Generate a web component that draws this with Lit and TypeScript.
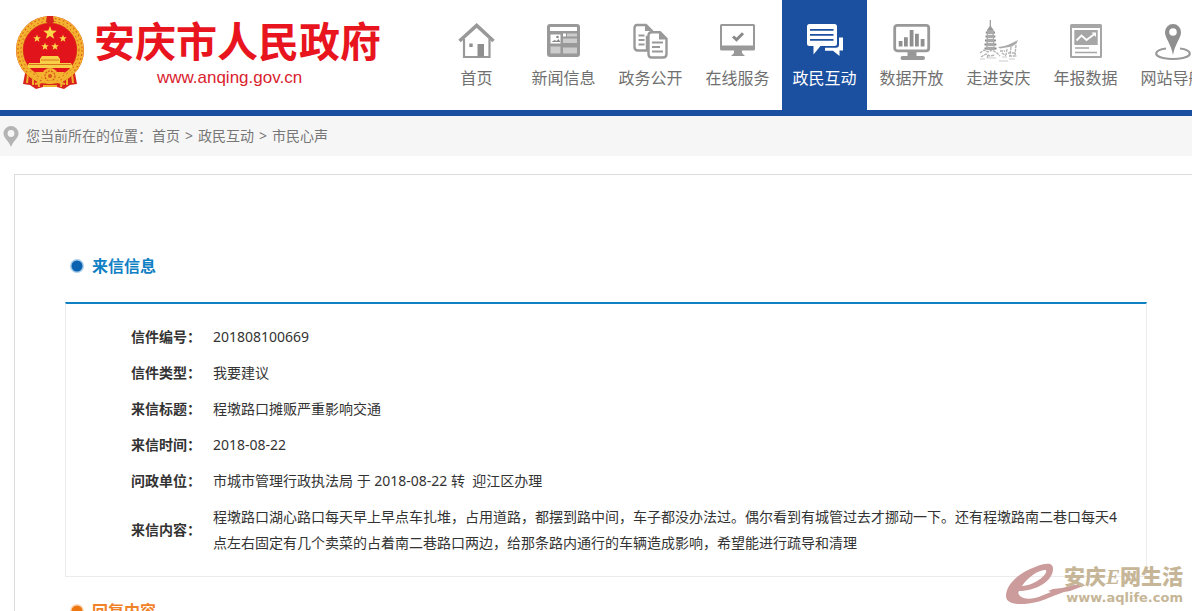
import { LitElement, html, css, svg } from "lit";
import { customElement } from "lit/decorators.js";
import { classMap } from "lit/directives/class-map.js";

const star = (cx: number, cy: number, r: number) => {
  const pts: string[] = [];
  for (let i = 0; i < 10; i++) {
    const a = (Math.PI * i) / 5 - Math.PI / 2;
    const d = i % 2 ? r * 0.42 : r;
    pts.push(`${(cx + d * Math.cos(a)).toFixed(2)},${(cy + d * Math.sin(a)).toFixed(2)}`);
  }
  return svg`<polygon points=${pts.join(" ")} fill="#fbd84a"/>`;
};

const emblem = html`<svg class="emblem" width="70" height="74" viewBox="0 0 70 74" aria-hidden="true">
  <path d="M11 52L8 68l7 1 6 4 7-2h14l7 2 6-4 7-1-3-16z" fill="#d8231c"/>
  <path d="M13 58l-1 9M18 60l0 9M23 63l1 8M57 58l1 9M52 60l0 9M47 63l-1 8M28 70h14" stroke="#f2b02c" stroke-width="2"/>
  <circle cx="35" cy="34" r="34" fill="#d93a1c"/>
  <circle cx="35" cy="34" r="30.500" fill="none" stroke="#f3b32f" stroke-width="6.600"/>
  <circle cx="35" cy="34" r="32" fill="none" stroke="#dc5a1e" stroke-width="1.200" stroke-dasharray="1.600 2.600"/>
  <circle cx="35" cy="34" r="29" fill="none" stroke="#dc5a1e" stroke-width="1" stroke-dasharray="1.600 2.800"/>
  <circle cx="35" cy="34" r="26.500" fill="#e2141b"/>
  <path d="M32 0h6l1 6-4 3-4-3z" fill="#d8231c"/>
  ${star(35, 17, 7)}${star(22, 22.5, 4)}${star(48, 22.5, 4)}${star(30, 30.5, 4)}${star(40, 30.5, 4)}
  <path d="M27 40h16l2 3v4h11l1 2v3H13v-3l1-2h11v-4z" fill="#f9cf48"/>
  <path d="M26 44h18M14 48.500h42" stroke="#d8761d" stroke-width="1"/>
  <path d="M20 56h30l-4 4H24z" fill="#f3b32f"/>
  <circle cx="35" cy="60" r="8" fill="#f3b32f"/>
  <circle cx="35" cy="60" r="5" fill="none" stroke="#d8541d" stroke-width="1.200" stroke-dasharray="2 1"/>
  <circle cx="35" cy="60" r="2" fill="#d8541d"/>
  <path d="M12 57q7 4 12 9M58 57q-7 4-12 9M20 68q15-5 30 0" fill="none" stroke="#f3b32f" stroke-width="2"/>
</svg>`;

const icons = {
  home: svg`<path d="M3.500 21L20.700 5.500 37.500 21" fill="none" stroke="#999" stroke-width="3.600"/>
    <path d="M8 19v18h25.500V19" fill="none" stroke="#999" stroke-width="2.200"/>
    <path d="M21.500 24h6.500v12.500h-6.500zM13.300 23.500h3.400v3.400h-3.400z" fill="#8f8f8f"/>`,
  news: svg`<rect x="4" y="4" width="33" height="33" rx="3" fill="#999"/>
    <path d="M7 7h27v4H7zM7.500 14.500h10v9h-10z" fill="#fff"/>
    <path d="M7.500 26.500h10v7h-10zM20 18.500h14v4.500H20zM20 27.500h14v6H20zM24 13.500h10v3H24z" fill="#ccc"/>
    <path d="M20 13.500h3v3h-3z" fill="#fff"/>
    <path d="M8.500 22l3-2 2 1 2-2 2 3z" fill="#888"/><circle cx="14.500" cy="17" r="1.300" fill="#888"/>`,
  docs: svg`<path d="M7 5h9l6 6v6h-5v13.500H8q-3.500 0-3.500-3.500V8.500Q4.500 5 7 5z" fill="#fff" stroke="#999" stroke-width="2.400"/>
    <path d="M15 4l7 7h-7z" fill="#999"/><path d="M8.500 15.500h6M8.500 20h6M8.500 24.500h6" stroke="#999" stroke-width="1.800"/>
    <path d="M21.500 12.200H30l6.500 6.500V34q0 3.500-3.500 3.500H21.500q-3 0-3-3.500V15.500q0-3.300 3-3.300z" fill="#fff" stroke="#999" stroke-width="2.400"/>
    <path d="M29 11.500l8 8h-8z" fill="#999"/><path d="M22 22.500h11M22 27h8M22 31.500h11" stroke="#999" stroke-width="1.800"/>`,
  screen: svg`<rect x="3" y="4" width="35" height="26.500" rx="1.500" fill="#999"/><path d="M5 6h31v19.500H5z" fill="#fff"/>
    <path d="M17 30h8v3l3 3H14l3-3z" fill="#999"/><path d="M16 16.500l3.500 3.200 6.500-6.500" fill="none" stroke="#8a8a8a" stroke-width="3"/>`,
  chat: svg`<path d="M35 17.500h4v13h-3.500V36L29 30.700h-8v-3h11q3 0 3-3z" fill="#fff"/>
    <path d="M5.500 4h25q2.500 0 2.500 2.500V23.500q0 2.500-2.500 2.500H16.500l-7 8.500V26h-4Q3 26 3 23.500v-17Q3 4 5.500 4z" fill="#fff"/>
    <path d="M6 9.800h23.500M6 14.800h23.500M6 19.800h23.500" stroke="#1b50a0" stroke-width="1.700"/>`,
  chart: svg`<rect x="3.700" y="5.300" width="34" height="25.500" rx="2.500" fill="#fff" stroke="#999" stroke-width="2.800"/>
    <path d="M16.500 32h9v4h-9z" fill="#999"/><rect x="9.500" y="36" width="24.500" height="4" rx="2" fill="#999"/>
    <path d="M7.700 21h3.800v5.500H7.700zM13 17.300h3.800v9.200H13zM18.700 10h3.800v16.500h-3.800zM24 13.700h3.800v12.800H24zM29.700 19h3.800v7.500h-3.800z" fill="#8f8f8f"/>`,
  tower: svg`<path d="M12.300 0v10" stroke="#999" stroke-width="1.200"/><path d="M9 10l3.300-4.500L15.600 10z" fill="#999"/>
    <path d="M7.800 12.500h9.200M7.500 16.500h9.800M7 20.500h10.800M6.500 24.500h11.800M6.500 28.500h12" stroke="#888" stroke-width="2"/>
    <path d="M9 10h6.700l1 20H8z" fill="#aaa"/><path d="M10 14.500h4.500M10 18.500h5M10 22.500h5M9.500 26.500h6" stroke="#eee" stroke-width="1.200"/>
    <path d="M20 27q8-1 13-3.500l7-3.500-1.500 3.500-4.500 3-12 2z" fill="#aaa"/>
    <path d="M2 33l4-3 4 2 4-2 5 3 3 3M3 37l5-3 4 2 5-1M22 31h5M29 29l-1 6M33 27l-1 9M38 25l-1 10M24 33l4 3M30 33h8M31 36h8M10 35l-1 4" fill="none" stroke="#b4b4b4" stroke-width="1.400" stroke-dasharray="3 .8"/>
    <path d="M2 39h5M10 38h8M24 37h5M31 39h6M21 41h9" stroke="#ddd" stroke-width="1.300"/>`,
  report: svg`<rect x="5" y="4" width="32" height="34" rx="1.500" fill="#a6a6a6"/><path d="M7 8h28v28H7z" fill="#fff"/>
    <path d="M9.300 10h23.400v15H9.300z" fill="#a6a6a6"/>
    <path d="M11.500 20.500l5-5 5 4.500 8-6" fill="none" stroke="#fff" stroke-width="1.800"/><path d="M26.500 12.500h4.500V17z" fill="#fff"/>
    <path d="M10 28h14M10 32.500h22" stroke="#a6a6a6" stroke-width="1.600"/>`,
  pin: svg`<path d="M14 28.500C2 30 1 36 11 38q10 2 20 0c10-2 9-8-3-9.500" fill="none" stroke="#999" stroke-width="2.200"/>
    <path d="M21 4a8 8 0 0 1 8 8.300C29 18 23 24 21 35 19 24 13 18 13 12.300A8 8 0 0 1 21 4z" fill="#8f8f8f"/><circle cx="21" cy="12" r="3.800" fill="#fff"/>`,
};

const NAV = [
  { label: "首页", icon: icons.home },
  { label: "新闻信息", icon: icons.news },
  { label: "政务公开", icon: icons.docs },
  { label: "在线服务", icon: icons.screen },
  { label: "政民互动", icon: icons.chat, active: true },
  { label: "数据开放", icon: icons.chart },
  { label: "走进安庆", icon: icons.tower },
  { label: "年报数据", icon: icons.report },
  { label: "网站导航", icon: icons.pin },
];

const LETTER = [
  ["信件编号：", "201808100669"],
  ["信件类型：", "我要建议"],
  ["来信标题：", "程墩路口摊贩严重影响交通"],
  ["来信时间：", "2018-08-22"],
  ["问政单位：", "市城市管理行政执法局 于 2018-08-22 转\u00a0 迎江区办理"],
  [
    "来信内容：",
    "程墩路口湖心路口每天早上早点车扎堆，占用道路，都摆到路中间，车子都没办法过。偶尔看到有城管过去才挪动一下。还有程墩路南二巷口每天4点左右固定有几个卖菜的占着南二巷路口两边，给那条路内通行的车辆造成影响，希望能进行疏导和清理",
  ],
];

@customElement("app-root")
export class AppRoot extends LitElement {
  static styles = css`
    :host {
      display: block;
      position: relative;
      height: 100vh;
      overflow: hidden;
      background: #fff;
      color: #333;
      font: 14px/26px "Noto Sans", "Noto Sans CJK SC", sans-serif;
    }
    a { color: inherit; text-decoration: none; }
    svg { display: block; flex: none; }
    .header {
      display: flex;
      height: 110px;
      border-bottom: 6px solid #1b50a0;
    }
    .brand {
      display: flex;
      flex: none;
      box-sizing: border-box;
      width: 434px;
      padding: 16px 0 0 15px;
      gap: 9px;
      color: #e8141e;
    }
    .names { display: flex; flex-direction: column; align-items: center; gap: 6px; }
    .name {
      margin: 0;
      font: 700 41px/46px "Noto Sans CJK SC", sans-serif;
      white-space: nowrap;
    }
    .site { font: 17px/20px "Liberation Sans", sans-serif; color: #d9232e; padding-right: 16px; }
    .nav { display: flex; flex: none; gap: 2px; }
    .item {
      display: flex;
      flex-direction: column;
      align-items: center;
      box-sizing: border-box;
      width: 85px;
      padding-top: 20px;
      color: #707070;
      font-size: 16px;
      line-height: 32px;
      white-space: nowrap;
    }
    .active { background: #1b50a0; color: #fff; }
    .crumbs {
      display: flex;
      align-items: center;
      gap: 7px;
      height: 40px;
      padding-left: 3px;
      background: #f6f6f6;
      color: #777;
    }
    .trail { display: flex; }
    .links { display: flex; gap: 5px; }
    .panel {
      margin: 18px -6px 0 14px;
      padding: 66px 50px 0;
      border: 1px solid #dcdcdc;
    }
    .title {
      display: flex;
      align-items: center;
      gap: 8px;
      margin: 0;
      padding-left: 5px;
      font-size: 16px;
      line-height: 50px;
      color: #1080c4;
    }
    .reply { color: #f08228; padding-top: 9px; }
    .box {
      margin-top: 11px;
      padding: 15px 16px 15px 65px;
      border: 1px solid #ececec;
      border-top: 2px solid #1080c4;
    }
    .letter { border-collapse: collapse; }
    th, td { padding: 5px 0; text-align: left; }
    th { padding-right: 12px; white-space: nowrap; }
    .watermark {
      position: absolute;
      right: 9px;
      bottom: 4px;
      display: flex;
      color: #c6b697;
    }
    .swoosh { margin-right: -26px; }
    .mark { display: flex; flex-direction: column; white-space: nowrap; text-align: right; }
    .cn { font: 900 21px/24px "Noto Sans CJK SC", sans-serif; }
    .e { font-family: "Liberation Serif", serif; font-style: italic; }
    .url { font: bold 13px/18px "DejaVu Sans", sans-serif; }
  `;

  render() {
    return html`
      <header class="header">
        <div class="brand">
          ${emblem}
          <div class="names">
            <h1 class="name">安庆市人民政府</h1>
            <a class="site" href="#">www.anqing.gov.cn</a>
          </div>
        </div>
        <nav class="nav">
          ${NAV.map(
            (n) => html`<a href="#" class=${classMap({ item: true, active: !!n.active })}>
              <svg width="41" height="42" viewBox="0 0 41 42" aria-hidden="true">${n.icon}</svg>${n.label}</a>`
          )}
        </nav>
      </header>
      <nav class="crumbs">
        <svg width="16" height="21" viewBox="0 0 16 21" aria-hidden="true">
          <path d="M8 0a7.500 7.500 0 0 1 7.500 7.500C15.500 12 10 15 8 21 6 15 .5 12 .5 7.500A7.500 7.500 0 0 1 8 0z" fill="#b4b4b4"/>
          <circle cx="8" cy="7.500" r="3.400" fill="#f6f6f6"/>
        </svg>
        <div class="trail">
          <span>您当前所在的位置：</span>
          <div class="links"><a href="#">首页</a><span>&gt;</span><a href="#">政民互动</a><span>&gt;</span><a href="#">市民心声</a></div>
        </div>
      </nav>
      <main class="panel">
        <h2 class="title">
          <svg width="14" height="14" aria-hidden="true"><circle cx="7" cy="7" r="7" fill="#a9cdea"/><circle cx="7" cy="7" r="5.500" fill="#0b62b0"/></svg>
          来信信息
        </h2>
        <div class="box">
          <table class="letter">
            ${LETTER.map(([k, v]) => html`<tr><th scope="row">${k}</th><td>${v}</td></tr>`)}
          </table>
        </div>
        <h2 class="title reply">
          <svg width="14" height="14" aria-hidden="true"><circle cx="7" cy="7" r="7" fill="#fbd9b8"/><circle cx="7" cy="7" r="5.500" fill="#ee7712"/></svg>
          回复内容
        </h2>
      </main>
      <div class="watermark">
        <svg class="swoosh" width="84" height="42" viewBox="0 0 84 42" aria-hidden="true">
          <path d="M13 28C30 28 47 18 47 6 47-1 40 0 29 4 12 10 0 22 0 33c0 10 18 9 31 6 8-2 13-5 19-7l8-3 6-1 16-6h-12l-12 3-9 1-5 2 3 1-10 4c-9 4-18 3-21 0-2-2-2-3-1-5zM16 23C22 13 35 6 40 7c2 4-10 15-24 16z" fill="#cc9c9c" fill-rule="evenodd"/>
        </svg>
        <div class="mark">
          <span class="cn">安庆<span class="e">E</span>网生活</span>
          <span class="url">www.aqlife.com</span>
        </div>
      </div>
    `;
  }
}
